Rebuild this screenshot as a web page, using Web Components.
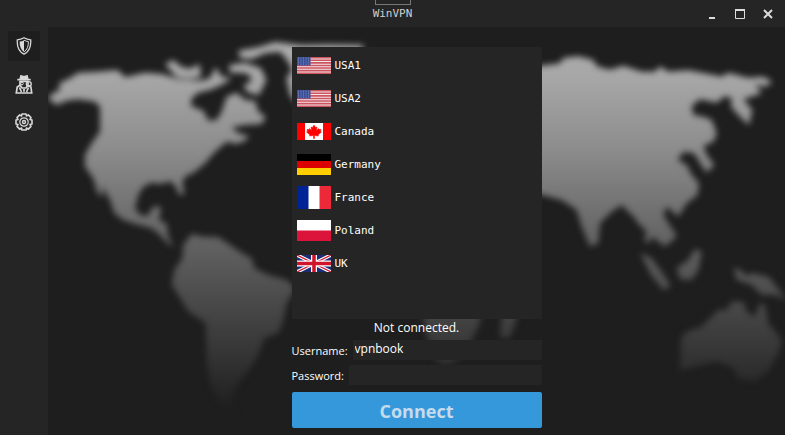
<!DOCTYPE html>
<html lang="en">
<head>
<meta charset="utf-8">
<title>WinVPN</title>
<style>
html, body { margin: 0; height: 100%; background: #1e1e1e; overflow: hidden; }
body { font: 12px/20px "Open Sans", "Noto Sans", sans-serif; color: #fff; }
</style>
</head>
<body>
<vpn-window></vpn-window>
<script>
const define = (name, html, setup) => customElements.define(name, class extends HTMLElement {
  constructor() {
    super();
    this.attachShadow({ mode: 'open' }).innerHTML = html;
  }
  connectedCallback() { if (setup) setup(this, this.shadowRoot); }
});

const stripes = Array.from({ length: 7 }, (_, i) => `<path d="M0 ${i * 4 + 1}H68" stroke="#cc5560" stroke-width="2.4"/>`).join('');
const stars = Array.from({ length: 20 }, (_, i) => `<circle cx="${3 + (i % 5) * 5}" cy="${2 + Math.floor(i / 5) * 4}" r="1" fill="#8f9fd0"/>`).join('');
const flags = {
  us: [68, 34, `<rect width="68" height="34" fill="#f4e4e6"/><g transform="scale(1 1.3)">${stripes}</g><rect width="27" height="17" fill="#3a4f96"/>${stars}`],
  ca: [68, 34, `<rect width="68" height="34" fill="#fff"/><path d="M0 0H16V34H0zM52 0H68V34H52z" fill="#f00"/><path d="M34 4l3 5 3-1-1 7 4-4 1 2 4 0-1 4 2 1-7 6 1 2-8-1v6h-2v-6l-8 1 1-2-7-6 2-1-1-4 4 0 1-2 4 4-1-7 3 1z" fill="#f00" stroke="#f00"/>`],
  de: [68, 42, `<rect width="68" height="42" fill="#d00"/><path d="M0 0H68V14H0z" fill="#000"/><path d="M0 28H68V42H0z" fill="#ffce00"/>`],
  fr: [68, 46, `<rect width="68" height="46" fill="#fff"/><path d="M0 0H23V46H0z" fill="#002395"/><path d="M45 0H68V46H45z" fill="#ed2939"/>`],
  pl: [68, 42, `<rect width="68" height="42" fill="#fff"/><path d="M0 21H68V42H0z" fill="#dc143c"/>`],
  gb: [68, 34, `<rect width="68" height="34" fill="#1d2c77"/><path d="M0 0L68 34M68 0L0 34" stroke="#fff" stroke-width="7"/><path d="M0 0L34 17M68 0L34 17M68 34L34 17M0 34L34 17" stroke="#cf142b" stroke-width="2.4"/><path d="M34 0V34M0 17H68" stroke="#fff" stroke-width="12"/><path d="M34 0V34M0 17H68" stroke="#cf142b" stroke-width="7"/>`]
};

define('country-flag', `<style>:host{display:block;width:34px}svg{display:block;width:100%}</style><svg aria-hidden="true"></svg>`, (el, root) => {
  const [w, h, art] = flags[el.getAttribute('code')];
  const svg = root.querySelector('svg');
  svg.setAttribute('viewBox', `0 0 ${w} ${h}`);
  svg.innerHTML = art;
});

define('server-item', `<style>
:host{display:block}
button{display:flex;align-items:center;gap:4px;width:100%;height:33px;padding:0 5px;border:0;background:none;color:#fff;font:11px/16px "DejaVu Sans Mono",monospace;text-align:left}
button:hover{background:#303030}
</style><button type="button"><slot name="flag"></slot><slot></slot></button>`);

define('nav-item', `<style>
:host{display:block}
button{display:grid;place-items:center;width:32px;height:30px;padding:0;border:0;border-radius:3px;background:none;color:#d8d8d8}
:host([active]) button{background:#1e1e1e}
</style><button type="button"><slot></slot></button>`, (el, root) => root.querySelector('button').setAttribute('aria-label', el.getAttribute('label')));

define('nav-bar', `<style>
:host{display:flex;flex-direction:column;align-items:center;gap:8px;width:48px;padding-top:4px;box-sizing:border-box;background:#252525}
svg{display:block}
</style>
<nav-item active label="Connection"><svg width="16" height="18" viewBox="0 0 16 18" fill="none" stroke="currentColor"><path d="M8 .8C6 2 3.500 2.700 1.300 2.800C.8 9.500 2.800 14.500 8 17.200C13.200 14.500 15.200 9.500 14.700 2.800C12.500 2.700 10 2 8 .8z" stroke-width="1.300"/><path d="M8 3.200C6.700 4 5.200 4.400 3.600 4.600C3.500 9.200 4.800 12.800 8 14.900z" fill="currentColor" stroke="none"/><path d="M8 3.200C9.300 4 10.800 4.400 12.400 4.600C12.500 9.200 11.200 12.800 8 14.900" stroke-width="1"/></svg></nav-item>
<nav-item label="Privacy"><svg width="18" height="19" viewBox="0 0 18 19" fill="none" stroke="currentColor" stroke-width="1.700"><path d="M5.200 4.200L6 .9L9 1.700L12 .9L12.800 4.200M2.300 4.700H15.700M4.500 6.500H13.500M5 6v4l2 3h4l2-3V6M4.500 10.500L2.200 12L1.300 18H16.700L15.900 12L13.500 10.500M4.500 12.500L6.500 17M13.500 12.500L11.500 17"/><path d="M6 2H12V5H6z" fill="currentColor" stroke="none"/><circle cx="7" cy="8.500" r="1.300" stroke-width="1"/><circle cx="13.800" cy="9" r="2.400" stroke-width="1.400"/><path d="M8 14h2l-.4 3H8.400z" fill="currentColor" stroke="none"/></svg></nav-item>
<nav-item label="Settings"><svg width="18" height="18" viewBox="0 0 18 18" fill="none" stroke="currentColor" stroke-width="1.600" stroke-linejoin="round"><path d="M7 1H11L11.500 3L13.300 1.900L16 4.600L15 6.500L17 7V11L15 11.500L16 13.400L13.300 16.100L11.500 15L11 17H7L6.500 15L4.700 16.100L2 13.400L3 11.500L1 11V7L3 6.500L2 4.600L4.700 1.900L6.500 3z"/><circle cx="9" cy="9" r="4.200" stroke-width="1.200"/><circle cx="9" cy="9" r="1.500" stroke-width="1.400"/></svg></nav-item>`);

define('title-bar', `<style>
:host{display:grid;grid-template-columns:1fr auto 1fr;align-items:center;height:27px;background:#252525;color:#d0d0d0;font:11px/16px "DejaVu Sans Mono",monospace}
h1{grid-column:2;margin:0;font:inherit}
.tools{display:flex;justify-content:flex-end;padding-right:3px}
button{display:grid;place-items:center;width:28px;height:27px;padding:0;border:0;background:none;color:#dcdcdc}
.grip{position:absolute;top:0;left:50%;width:34px;height:4px;margin-left:-18px;border:1px solid #777;border-top:0}
</style><span class="grip"></span><h1>WinVPN</h1>
<div class="tools">
<button type="button" aria-label="Minimize"><svg width="12" height="12" fill="none" stroke="currentColor" stroke-width="2"><path d="M3 10H9"/></svg></button>
<button type="button" aria-label="Maximize"><svg width="12" height="12" fill="none" stroke="currentColor"><path d="M1.500 2V10.500H10.500V2"/><path d="M1 2H11" stroke-width="2"/></svg></button>
<button type="button" aria-label="Close"><svg width="12" height="12" fill="none" stroke="currentColor" stroke-width="2"><path d="M2 2L10 10M10 2L2 10"/></svg></button>
</div>`);

define('world-map', `<style>:host{display:block}svg{display:block;width:100%;height:100%}</style>
<svg viewBox="0 0 2211 1224" preserveAspectRatio="xMidYMid slice" aria-hidden="true">
<defs>
<linearGradient id="fade" x1="0" y1="0" x2="0" y2="1"><stop offset="0" stop-color="#b0b0b0"/><stop offset=".13" stop-color="#a6a6a6"/><stop offset=".3" stop-color="#8c8c8c"/><stop offset=".5" stop-color="#676767"/><stop offset=".7" stop-color="#454545"/><stop offset=".83" stop-color="#303030"/><stop offset=".94" stop-color="#1e1e1e"/><stop offset="1" stop-color="#1e1e1e"/></linearGradient>
<filter id="soft" x="-5%" y="-5%" width="110%" height="110%" color-interpolation-filters="sRGB"><feGaussianBlur stdDeviation="9"/></filter>
<mask id="land" maskUnits="userSpaceOnUse" x="0" y="0" width="2211" height="1224" style="mask-type:alpha"><g fill="#fff" filter="url(#soft)">
<g transform="translate(-9 -21)">
<path d="M8 235L22 222L45 208L42 190L75 175L100 158L160 155L218 150L240 172L300 158L350 162L400 178L470 182L495 175L512 142L530 170L560 175L530 195L495 210L460 218L440 235L438 258L475 272L490 302L515 300L530 275L545 230L575 218L600 240L630 242L640 275L662 290L650 312L600 315L560 322L580 340L612 348L600 362L575 372L545 365L510 395L480 430L450 455L418 472L412 490L418 520L405 528L392 500L378 484L345 492L320 488L295 500L280 525L270 565L285 585L308 588L325 560L348 560L342 600L365 612L370 650L385 680L370 672L345 645L320 625L270 612L235 600L208 580L195 540L170 495L175 530L158 520L145 475L120 440L120 405L140 370L165 335L165 260L150 245L100 238L65 242L35 255Z"/>
<path d="M360 132L385 120L408 140L435 146L464 132L468 172L430 176L395 172Z"/>
<path d="M552 135L600 128L648 145L664 180L642 226L606 217L596 195L618 185L615 165L590 158L555 158Z"/>
<path d="M580 92L640 82L690 66L770 76L850 74L955 76L950 100L900 190L820 300L770 270L735 225L724 175L742 150L726 120L705 95L660 100L620 118L585 114Z"/>
</g>
<g transform="translate(-9 579)">
<path d="M415 75L440 42L470 50L520 52L555 75L595 102L620 115L628 145L670 165L725 180L752 205L725 250L715 300L700 340L658 355L640 405L605 460L580 490L560 540L572 580L540 585L520 550L495 490L485 430L482 310L430 275L400 225L380 195L388 150L412 115Z"/>
</g>
<g transform="translate(1461 -21)">
<path d="M-260 180L-180 145L-100 150L-30 140L22 137L75 130L85 114L130 109L175 120L185 139L225 149L265 137L320 155L360 155L375 139L400 155L460 151L520 162L560 170L580 158L640 174L685 170L712 186L690 200L660 192L680 220L625 238L652 270L642 316L615 290L588 260L590 235L570 228L545 248L495 238L470 258L475 285L505 290L530 300L545 340L535 365L505 378L515 405L538 435L515 458L493 425L478 400L445 395L428 420L455 435L470 465L492 490L488 525L455 550L430 590L395 560L385 585L410 625L425 650L390 680L365 660L335 625L290 585L260 555L230 575L195 610L190 670L165 680L140 620L125 570L80 540L22 525L-60 500L-200 490Z"/>
</g>
<g transform="translate(1461 579)">
<path d="M300 0L340 -20L400 15L422 40L405 68L385 75L350 50L340 72L328 60L335 35Z"/>
<path d="M316 98L350 116L387 165L407 197L387 212L348 165Z"/>
<path d="M425 145L460 120L480 88L500 95L490 150L470 180L435 178Z"/>
<path d="M596 142L620 152L632 168L650 160L700 170L725 200L754 242L720 225L680 225L650 195L605 180Z"/>
<path d="M438 355L455 335L500 320L550 270L575 270L590 245L625 245L635 275L660 290L675 250L690 255L700 310L740 360L735 390L700 455L660 485L610 478L595 445L545 425L500 435L435 452Z"/>
</g>
<g transform="translate(711 849)"><path d="M400 -100H620L580 50L550 110L515 152L485 168L450 152L420 60ZM650 15L700 -25L695 25L675 82L645 85Z"/></g>
</g></mask></defs>
<rect width="2211" height="1224" fill="url(#fade)" mask="url(#land)"/>
</svg>`);

define('connect-panel', `<style>
:host{display:flex;flex-direction:column;width:250px;padding:20px 0 7px;box-sizing:border-box}
.servers{flex:1;min-height:0;overflow:auto;padding-top:2px;background:#252525}
.status{margin:0 0 2px;height:19px;text-align:center;line-height:18px}
form{display:flex;flex-direction:column;gap:5px}
.field{display:flex;gap:5px}
label{height:20px;font-size:11px;line-height:22px}
input{flex:1;min-width:0;height:20px;box-sizing:border-box;padding:0 2px 2px;border:0;background:#252525;color:#fff;font:inherit;outline:0}
.go{height:36px;margin-top:2px;padding:2px 0 0;border:0;border-radius:2px;background:#3498db;color:#c6dbec;font:700 18px/34px "Open Sans","Noto Sans",sans-serif}
</style>
<div class="servers">
<server-item><country-flag slot="flag" code="us"></country-flag>USA1</server-item>
<server-item><country-flag slot="flag" code="us"></country-flag>USA2</server-item>
<server-item><country-flag slot="flag" code="ca"></country-flag>Canada</server-item>
<server-item><country-flag slot="flag" code="de"></country-flag>Germany</server-item>
<server-item><country-flag slot="flag" code="fr"></country-flag>France</server-item>
<server-item><country-flag slot="flag" code="pl"></country-flag>Poland</server-item>
<server-item><country-flag slot="flag" code="gb"></country-flag>UK</server-item>
</div>
<p class="status" role="status">Not connected.</p>
<form onsubmit="return false">
<div class="field"><label for="user">Username:</label><input id="user" value="vpnbook" autocomplete="off"></div>
<div class="field"><label for="pass">Password:</label><input id="pass" type="password" autocomplete="off"></div>
<button class="go">Connect</button>
</form>`);

define('vpn-window', `<style>
:host{display:flex;flex-direction:column;height:100vh}
.body{flex:1;display:flex;min-height:0}
main{flex:1;display:grid;justify-items:center;min-width:0;min-height:0;grid-template-rows:minmax(0,1fr);background:#1e1e1e}
world-map,connect-panel{grid-area:1/1;min-height:0}
world-map{width:100%;height:100%}
connect-panel{z-index:1}
</style>
<title-bar></title-bar>
<div class="body"><nav-bar></nav-bar><main><world-map></world-map><connect-panel></connect-panel></main></div>`);
</script>
</body>
</html>
